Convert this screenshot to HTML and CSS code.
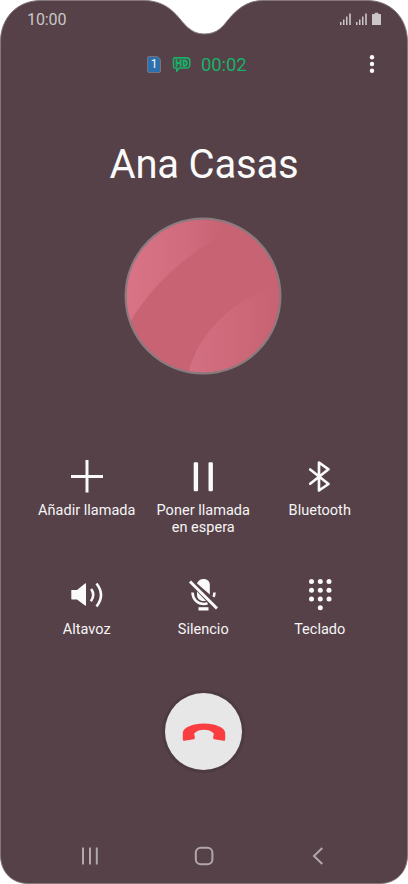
FILE: index.html
```html
<!DOCTYPE html>
<html lang="es">
<head>
<meta charset="utf-8">
<title>Llamada</title>
<link rel="stylesheet" href="styles.css">
</head>
<body>
<main class="phone">
  <svg class="screen-shape" viewBox="0 0 408 884" aria-hidden="true">
    <path d="M.5 42C.5 18 17 .5 41 .5H144C159 .5 169 7 176 14.500C184 23 190 34 204 34C218 34 223 26 228 20C238 8 248 .5 263 .5H367C391 .5 407.500 18 407.500 42V855C407.500 872 396 883.500 380 883.500H28C12 883.500 .5 872 .5 855Z"/>
  </svg>
  <header class="status">
    <span>10:00</span>
    <svg width="44" height="16" viewBox="0 0 44 16" fill="#cbc6c8">
      <path d="M1 11h1.500v3H1zM4 8.500h1.500V14H4zM7 5.500h1.500V14H7zM10.200 2.500h1.600V14h-1.600zM17 11h1.500v3H17zM20 8.500h1.500V14H20zM23 5.500h1.500V14H23zM26.200 2.500h1.600V14h-1.600z"/>
      <path d="M33.800 3h2V1.800h3.500V3h2q.7 0 .7.700V14h-9V3.700q0-.7.800-.7z"/>
    </svg>
  </header>
  <div class="call-bar">
    <div class="call-info">
      <span class="sim">1</span>
      <svg width="19" height="16" viewBox="0 0 19 16" fill="none" stroke="#19b069">
        <path stroke-width="1.600" d="M3 1.900h11.500q3.300 0 3.300 3.300v3.500q0 3.300-3.300 3.300H7.500L4.800 15V12H3q-1.500 0-1.500-1.500V3.400q0-1.500 1.500-1.500z"/>
        <path stroke-width="2" d="M4.600 3.200v7.500M8.500 3.200v7.500M4.500 7h4M11.500 4.500v5.200h1.300q2 0 2-2.600t-2-2.600z"/>
      </svg>
      <span class="timer">00:02</span>
    </div>
    <svg class="more" width="6" height="20" viewBox="0 0 6 20" fill="#fafafa"><circle cx="3" cy="3.200" r="2.200"/><circle cx="3" cy="10" r="2.200"/><circle cx="3" cy="16.800" r="2.200"/></svg>
  </div>
  <h1 class="name">Ana Casas</h1>
  <svg class="avatar" width="158" height="158" viewBox="0 0 158 158">
    <defs>
      <linearGradient id="upper" gradientUnits="userSpaceOnUse" x1="2" y1="0" x2="98" y2="0"><stop stop-color="#d87486"/><stop offset=".65" stop-color="#cf6b7d"/><stop offset="1" stop-color="#c86373"/></linearGradient>
      <linearGradient id="lower" gradientUnits="userSpaceOnUse" x1="64" y1="0" x2="152" y2="0"><stop stop-color="#d37081"/><stop offset="1" stop-color="#c86373"/></linearGradient>
      <clipPath id="disc"><circle cx="79" cy="79" r="77"/></clipPath>
    </defs>
    <circle cx="79" cy="79" r="77" fill="#c86373"/>
    <g clip-path="url(#disc)">
      <path fill="url(#upper)" d="M0 0H118V10C78 24 32 61 6 105L0 118Z"/>
      <path fill="url(#lower)" d="M64 158C73 116 112 79 158 68V158Z"/>
    </g>
    <circle cx="79" cy="79" r="77.400" fill="none" stroke="#8a7b7f" stroke-width="2.200"/>
  </svg>
  <section class="actions">
    <div class="action">
      <svg width="36" height="36" viewBox="0 0 36 36" fill="none" stroke="#fafafa" stroke-width="3"><path d="M18 2v32.500M2 18.500h32"/></svg>
      <span>Añadir llamada</span>
    </div>
    <div class="action">
      <svg width="36" height="36" viewBox="0 0 36 36" fill="#fafafa"><rect x="8.700" y="4.300" width="4.400" height="29" rx="1.200"/><rect x="23.500" y="4.300" width="4.400" height="29" rx="1.200"/></svg>
      <span>Poner llamada<br>en espera</span>
    </div>
    <div class="action">
      <svg width="36" height="36" viewBox="0 0 36 36" fill="none" stroke="#fafafa" stroke-width="2.700" stroke-linecap="round" stroke-linejoin="round"><path d="M8.200 11.500 26.500 26 17 32.500V4.500L26.500 11.300 8.200 25.700"/></svg>
      <span>Bluetooth</span>
    </div>
    <div class="action">
      <svg width="36" height="36" viewBox="0 0 36 36"><path fill="#fafafa" d="M2.300 13h5.700l8-6.500q1-.7 1 .4v21.200q0 1.200-1 .4l-8-6H3q-.7 0-.7-.7z"/><path fill="none" stroke="#fafafa" stroke-width="2.600" d="M22.200 12q4.200 6-.3 12.200M27.500 6.500q9 11.600 0 23"/></svg>
      <span>Altavoz</span>
    </div>
    <div class="action">
      <svg width="36" height="36" viewBox="0 0 36 36" fill="#fafafa"><path d="M12 6.500c1-3 3.300-4.500 6.500-4.500 4 0 6.300 2.500 6.300 6v9.500z"/><path d="M12 14.500v3.200c0 4 3 6.300 7 6.300h2z"/><path fill="none" stroke="#fafafa" stroke-width="2.600" d="M7.500 15.500c.3 7 5 11.500 11.500 11.500 1.300 0 2.400-.2 3.500-.7M29.500 15.500q-.1 2.500-1 4.300"/><path d="M13.500 30.200h10v3.300h-10z"/><path fill="none" stroke="#fafafa" stroke-width="3" d="m5 4.500 27 27"/></svg>
      <span>Silencio</span>
    </div>
    <div class="action">
      <svg width="36" height="36" viewBox="0 0 36 36" fill="#fafafa"><circle cx="9.500" cy="4.500" r="2.500"/><circle cx="18.300" cy="4.500" r="2.500"/><circle cx="27" cy="4.500" r="2.500"/><circle cx="9.500" cy="13.200" r="2.500"/><circle cx="18.300" cy="13.200" r="2.500"/><circle cx="27" cy="13.200" r="2.500"/><circle cx="9.500" cy="22" r="2.500"/><circle cx="18.300" cy="22" r="2.500"/><circle cx="27" cy="22" r="2.500"/><circle cx="18.300" cy="30.800" r="2.500"/></svg>
      <span>Teclado</span>
    </div>
  </section>
  <div class="hangup">
    <svg width="44" height="20" viewBox="0 0 44 20"><path fill="#f93d40" d="M.8 17.500V11C.8 5.500 11 1.500 22 1.500S43.200 5.500 43.200 11v6.500q0 1.500-1.500 1.300l-9.500-1.600q-1.300-.3-1.100-1.600l.8-4C29 8.800 26 7.800 22 7.800s-7 1-9.900 3.800l.8 4q.2 1.300-1.100 1.600l-9.500 1.600Q.8 19 .8 17.500z"/></svg>
  </div>
  <nav class="nav">
    <svg width="20" height="20" viewBox="0 0 20 20"><path d="M3 1.500v17M10 1.500v17M16.800 1.500v17"/></svg>
    <svg width="20" height="20" viewBox="0 0 20 20"><rect x="1.800" y="1.800" width="16.600" height="16.400" rx="5"/></svg>
    <svg width="20" height="20" viewBox="0 0 20 20"><path d="M14.300 2 6 10l8.300 8"/></svg>
  </nav>
</main>
</body>
</html>
```
FILE: styles.css
```css
* { box-sizing: border-box; }
body { margin: 0; background: #fff; font-family: Roboto, sans-serif; color: #f7f5f6; }
.phone { position: relative; isolation: isolate; width: 408px; height: 884px; display: flex; flex-direction: column; align-items: center; }
.screen-shape { position: absolute; inset: 0; z-index: -1; width: 100%; height: 100%; fill: #554147; stroke: #85777b; stroke-width: 1; }
.status { width: 100%; height: 38px; padding: 0 25px 0 27px; display: flex; justify-content: space-between; align-items: center; font-size: 16px; letter-spacing: -.1px; color: #cbc6c8; }
.call-bar { width: 100%; height: 52px; display: flex; align-items: center; justify-content: space-between; padding: 0 33px 0 147px; }
.call-info { display: flex; align-items: center; }
.sim { width: 14px; height: 17px; margin-right: 11px; display: grid; place-items: center; background: #2e6fae; border: 1px solid #79727d; border-radius: 2px 5px 2px 2px; font-size: 12px; line-height: 15px; }
.timer { margin-left: 10px; padding-top: 1px; font-size: 18.500px; line-height: 22px; letter-spacing: -.1px; color: #19b069; }
.name { margin: 51px 0 0; height: 48px; line-height: 48px; font-size: 40px; letter-spacing: -.2px; font-weight: 400; color: #fafafa; }
.avatar { margin: 27.500px 2px 0 0; flex: none; }
.actions { display: grid; grid-template-columns: repeat(3, 116.500px); grid-template-rows: 119px 80px; margin: 83px 1.500px 0 0; }
.action { display: flex; flex-direction: column; align-items: center; text-align: center; font-size: 14.500px; line-height: 17px; letter-spacing: .02px; white-space: nowrap; }
.action svg { flex: none; margin-bottom: 8px; }
.hangup { width: 77px; height: 77px; margin: 36.500px 1px 0 0; flex: none; border-radius: 50%; display: grid; place-items: center; background: #e7e7e7; box-shadow: 0 0 0 3px #4d3b41; }
.nav { width: 248px; margin-top: 76px; display: flex; justify-content: space-between; fill: none; stroke: #b1a8ab; stroke-width: 2; }
```
